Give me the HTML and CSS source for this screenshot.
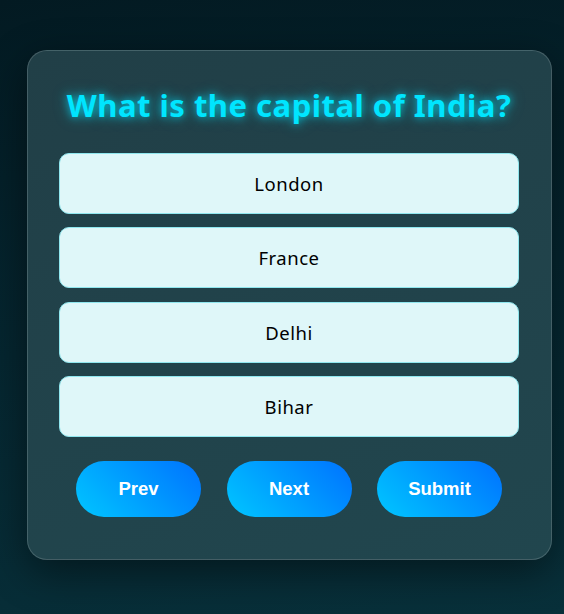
FILE: index.html
```html
<!DOCTYPE html>
<html>
<head>
<meta charset="utf-8">
<link rel="stylesheet" href="styles.css">
</head>
<body>
<main class="page">
  <section class="card">
    <h1 class="question">What is the capital of India?</h1>
    <div class="options">
      <button class="option">London</button>
      <button class="option">France</button>
      <button class="option">Delhi</button>
      <button class="option">Bihar</button>
    </div>
    <div class="controls">
      <button class="nav">Prev</button>
      <button class="nav">Next</button>
      <button class="nav">Submit</button>
    </div>
  </section>
</main>
</body>
</html>
```
FILE: styles.css
```css
html, body {
  margin: 0;
  height: 100%;
}
body {
  background: linear-gradient(170deg, #031a22 0%, #052630 50%, #08303a 100%);
  font-family: "Noto Sans", sans-serif;
  overflow: hidden;
}
.page {
  padding: 50px 12px 0 27px;
}
.card {
  width: 460px;
  padding: 32px 32px 42px 31px;
  background: linear-gradient(160deg, #213f47 0%, #21464e 100%);
  border: 1px solid rgba(255, 255, 255, 0.16);
  border-radius: 20px;
  box-shadow: 0 12px 40px rgba(0, 0, 0, 0.45);
  display: flex;
  flex-direction: column;
}
.question {
  margin: 0 0 25px 0;
  height: 45px;
  line-height: 45px;
  text-align: center;
  font-size: 31px;
  letter-spacing: 0.5px;
  font-weight: 700;
  color: #00e5ff;
  text-shadow: 0 0 8px rgba(0, 229, 255, 0.75), 0 0 16px rgba(0, 229, 255, 0.35);
  white-space: nowrap;
}
.options {
  display: flex;
  flex-direction: column;
  gap: 13.35px;
}
.option {
  height: 61px;
  background: #dff7f9;
  border: 1px solid #8fe6ee;
  border-radius: 10px;
  font-family: "Noto Sans", sans-serif;
  font-size: 18.5px;
  letter-spacing: 0.5px;
  color: #000;
  padding: 0;
}
.controls {
  margin-top: 24px;
  display: flex;
  justify-content: center;
  gap: 25.5px;
}
.nav {
  width: 125px;
  height: 56px;
  border: none;
  border-radius: 28px;
  background: linear-gradient(45deg, #00c6ff, #0072ff);
  color: #fff;
  font-family: "Liberation Sans", Arial, sans-serif;
  font-weight: 700;
  font-size: 18.5px;
  padding: 0;
}
```
